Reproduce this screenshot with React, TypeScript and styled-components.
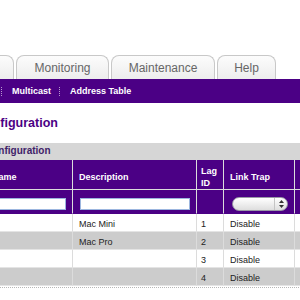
import React from 'react';
import styled, { createGlobalStyle } from 'styled-components';

const PURPLE = '#4b0085';
const GRID = '#dcdcdc';
const COLUMNS = '26px 87px 124px 27px 71px 40px';

const tabs = [
  { label: 'Switching', width: 104 },
  { label: 'Monitoring', width: 93 },
  { label: 'Maintenance', width: 104 },
  { label: 'Help', width: 59 },
];

const navLinks = ['Multicast', 'Address Table'];

const rows = [
  { port: 'l1', description: 'Mac Mini', lag: 1, trap: 'Disable' },
  { port: 'l2', description: 'Mac Pro', lag: 2, trap: 'Disable' },
  { port: 'l3', description: '', lag: 3, trap: 'Disable' },
  { port: 'l4', description: '', lag: 4, trap: 'Disable' },
];

const GlobalStyle = createGlobalStyle`
  html, body {
    margin: 0;
    padding: 0;
    background: #ffffff;
  }
  body {
    font-family: "Liberation Sans", Arial, sans-serif;
  }
`;

export default function App() {
  return (
    <>
      <GlobalStyle />
      <Page>
        <TabBar>
          {tabs.map((tab) => (
            <Tab key={tab.label} $width={tab.width}>
              {tab.label}
            </Tab>
          ))}
        </TabBar>
        <Nav>
          {navLinks.map((link) => (
            <React.Fragment key={link}>
              <Sep />
              <NavLink>{link}</NavLink>
            </React.Fragment>
          ))}
        </Nav>
        <Title>Configuration</Title>
        <SectionBar>Configuration</SectionBar>
        <TableWrap>
          <HeadRow>
            <HeadCell />
            <HeadCell>Name</HeadCell>
            <HeadCell>Description</HeadCell>
            <HeadCell $tight>
              Lag
              <br />
              ID
            </HeadCell>
            <HeadCell>Link Trap</HeadCell>
            <HeadCell>Admin Mode</HeadCell>
          </HeadRow>
          <FilterRow>
            <FilterCell />
            <FilterCell>
              <TextInput type="text" />
            </FilterCell>
            <FilterCell>
              <TextInput type="text" />
            </FilterCell>
            <FilterCell />
            <FilterCell>
              <SelectBox>
                <SelectArrows>
                  <svg width="5" height="8" viewBox="0 0 5 8">
                    <path d="M2.5 0 L5 3 L0 3 Z" fill="#333" />
                    <path d="M0 5 L5 5 L2.5 8 Z" fill="#333" />
                  </svg>
                </SelectArrows>
              </SelectBox>
            </FilterCell>
            <FilterCell />
          </FilterRow>
          {rows.map((row, index) => (
            <DataRow key={row.port} $shaded={index % 2 === 1}>
              <Cell>{row.port}</Cell>
              <Cell />
              <Cell>{row.description}</Cell>
              <Cell $tight>{row.lag}</Cell>
              <Cell>{row.trap}</Cell>
              <Cell />
            </DataRow>
          ))}
        </TableWrap>
      </Page>
    </>
  );
}

const Page = styled.div`
  width: 300px;
  height: 300px;
  overflow: hidden;
  padding-top: 55px;
  box-sizing: border-box;
`;

const TabBar = styled.div`
  display: flex;
  gap: 2px;
  height: 24px;
  margin-left: -90px;
`;

const Tab = styled.div<{ $width: number }>`
  flex: 0 0 ${(p) => p.$width}px;
  box-sizing: border-box;
  display: flex;
  align-items: center;
  justify-content: center;
  border: 1px solid #c8c8c8;
  border-bottom: none;
  border-radius: 8px 8px 0 0;
  background: linear-gradient(#fcfcfc, #ededed);
  color: #666666;
  font-size: 12px;
  padding-top: 1px;
`;

const Nav = styled.div`
  display: flex;
  align-items: center;
  height: 24px;
  padding-left: 1px;
  background: ${PURPLE};
`;

const Sep = styled.span`
  display: inline-block;
  height: 9px;
  border-left: 1px dotted rgba(255, 255, 255, 0.6);
`;

const NavLink = styled.span`
  padding: 0 8px 0 10px;
  color: #ffffff;
  font-size: 9px;
  font-weight: bold;
`;

const Title = styled.h1`
  margin: 0 0 0 -24px;
  height: 40px;
  line-height: 40px;
  color: ${PURPLE};
  font-size: 12.5px;
  font-weight: bold;
`;

const SectionBar = styled.div`
  height: 17px;
  line-height: 16px;
  margin-left: -15px;
  background: #d6d6d6;
  color: #3f2268;
  font-size: 10px;
  font-weight: bold;
`;

const TableWrap = styled.div`
  margin-left: -40px;
  width: 375px;
  border-bottom: 1px dotted #b8b8b8;
  padding-bottom: 1px;
`;

const GridRow = styled.div`
  display: grid;
  grid-template-columns: ${COLUMNS};
`;

const HeadRow = styled(GridRow)`
  height: 30px;
  background: ${PURPLE};
`;

const HeadCell = styled.div<{ $tight?: boolean }>`
  box-sizing: border-box;
  display: flex;
  align-items: center;
  padding: 5px ${(p) => (p.$tight ? 4 : 6)}px 0;
  border-right: 1px solid ${GRID};
  border-bottom: 1px solid ${GRID};
  color: #ffffff;
  font-size: 9px;
  font-weight: bold;
  line-height: 12px;
`;

const FilterRow = styled(GridRow)`
  height: 24px;
  background: ${PURPLE};
`;

const FilterCell = styled.div`
  box-sizing: border-box;
  display: flex;
  align-items: center;
  justify-content: center;
  padding-top: 4px;
  border-right: 1px solid ${GRID};
  border-bottom: 1px solid ${PURPLE};
`;

const TextInput = styled.input`
  box-sizing: border-box;
  width: calc(100% - 13px);
  height: 12px;
  margin: 0;
  padding: 0;
  border: 1px solid #9cb6df;
  background: #ffffff;
  outline: none;
`;

const SelectBox = styled.div`
  box-sizing: border-box;
  width: 56px;
  height: 14px;
  margin-left: 2px;
  display: flex;
  justify-content: flex-end;
  border: 1px solid #9a9aa6;
  border-radius: 7px;
  background: linear-gradient(#ffffff, #dedede);
`;

const SelectArrows = styled.span`
  display: flex;
  align-items: center;
  justify-content: center;
  width: 12px;
  border-left: 1px solid #c4c4c4;
`;

const DataRow = styled(GridRow)<{ $shaded: boolean }>`
  height: 18px;
  background: ${(p) => (p.$shaded ? '#cccccc' : '#ffffff')};
`;

const Cell = styled.div<{ $tight?: boolean }>`
  box-sizing: border-box;
  display: flex;
  align-items: center;
  padding: 2px ${(p) => (p.$tight ? 4 : 6)}px 0;
  border-right: 1px solid ${GRID};
  border-bottom: 1px solid #e4e4e4;
  color: #222222;
  font-size: 9px;
  white-space: nowrap;
  overflow: hidden;
`;
